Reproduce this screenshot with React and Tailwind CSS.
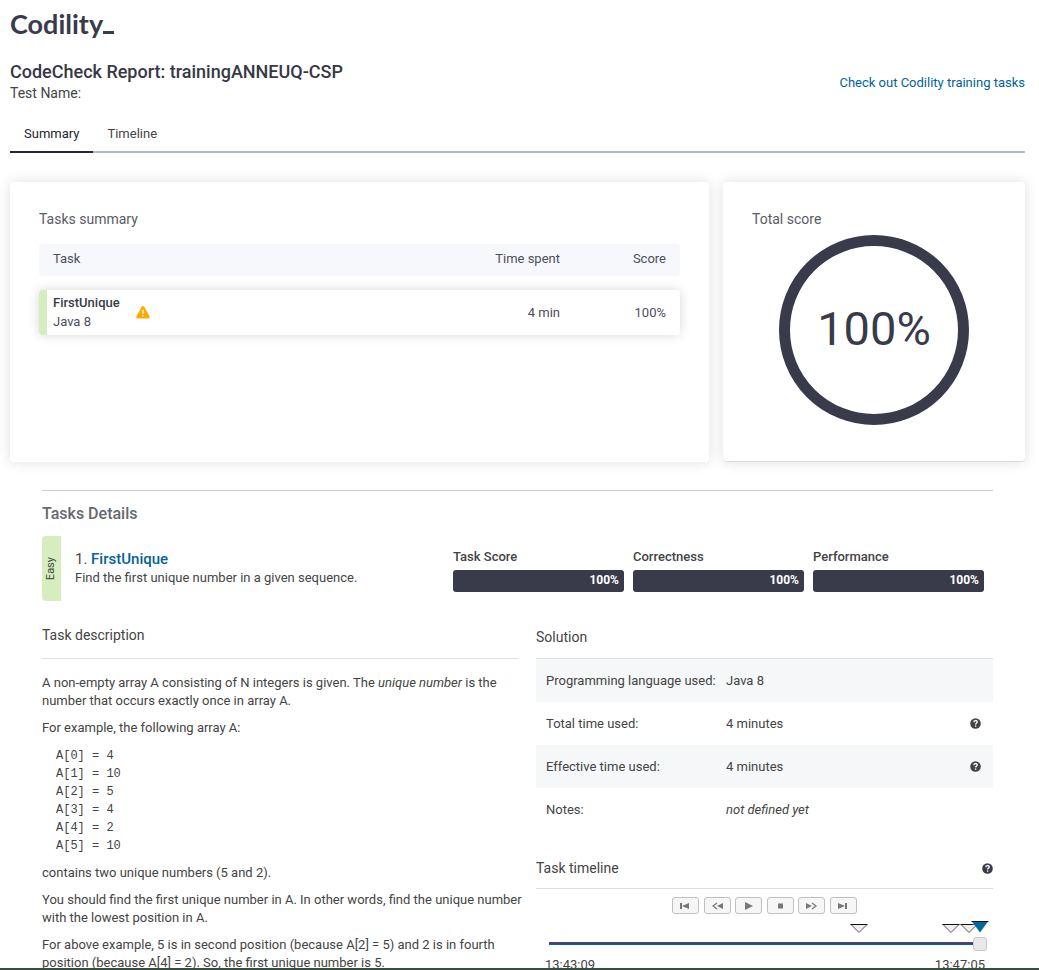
import React from "react";

const metrics = ["Task Score", "Correctness", "Performance"];

const solutionRows = [
  { label: "Programming language used:", value: "Java 8" },
  { label: "Total time used:", value: "4 minutes", help: true },
  { label: "Effective time used:", value: "4 minutes", help: true },
  { label: "Notes:", value: "not defined yet", italic: true },
];

const playerButtons = [
  { name: "Go to start", shape: <><path d="M0 1h2v6H0z" /><path d="M9 1v6L2 4z" /></> },
  { name: "Rewind", shape: <><path d="M5 1 1 4l4 3" fill="none" stroke="currentColor" strokeWidth="1.3" /><path d="M11 1v6L5 4z" /></> },
  { name: "Play", shape: <path d="M2 0v8l8-4z" /> },
  { name: "Stop", shape: <path d="M3 1.500h5v5H3z" /> },
  { name: "Fast forward", shape: <><path d="M0 1v6l6-3z" /><path d="M6 1l4 3-4 3" fill="none" stroke="currentColor" strokeWidth="1.3" /></> },
  { name: "Go to end", shape: <><path d="M0 1v6l7-3z" /><path d="M7 1h2v6H7z" /></> },
];

function HelpButton({ dark }) {
  return (
    <button type="button" aria-label="Help" className={dark ? "block text-[#393b4a]" : "block text-[#444444]"}>
      <svg width="11" height="11" viewBox="0 0 11 11" aria-hidden="true">
        <circle cx="5.5" cy="5.5" r="5.3" fill="currentColor" />
        <path d="M3.800 4.200C3.800 2 7.200 2 7.200 4 7.200 5.300 5.600 5.200 5.600 6.500" fill="none" stroke="#fff" strokeWidth="1.300" />
        <path d="M4.900 7.400h1.400v1.300H4.900z" fill="#fff" />
      </svg>
    </button>
  );
}

function Logo() {
  return (
    <a href="#home" aria-label="Codility" className="flex w-fit items-end font-['Lato',sans-serif] text-[27px] leading-[32px] font-bold text-[#393b4a]">
      Codility
      <svg width="11" height="12" viewBox="0 0 11 12" aria-hidden="true">
        <path d="M0 3h11v3H0z" fill="currentColor" />
      </svg>
    </a>
  );
}

function SummaryCard() {
  return (
    <section className="rounded-sm bg-white px-[29px] pt-[27px] pb-8 shadow-[0_0_14px_rgba(0,0,0,0.13)]">
      <h2 className="pb-px text-[14px] leading-5 text-[#5a5b66]">Tasks summary</h2>
      <table className="w-full border-separate border-spacing-x-0 border-spacing-y-[14px] text-[13px] text-[#4d4e5c]">
        <thead>
          <tr className="h-8">
            <th className="rounded-l-sm bg-[#f7f8fb] pb-[2px] pl-[14px] text-left font-normal">Task</th>
            <th className="bg-[#f7f8fb] pb-[2px] text-right font-normal">Time spent</th>
            <th className="w-[120px] rounded-r-sm bg-[#f7f8fb] pr-[14px] pb-[2px] text-right font-normal">Score</th>
          </tr>
        </thead>
        <tbody>
          <tr className="rounded-sm shadow-[0_0_12px_rgba(0,0,0,0.16)]">
            <td className="rounded-l-sm border-l-8 border-[#d5edbf] bg-white pt-[3px] pb-1 pl-[6px]">
              <div className="flex items-center gap-4">
                <div className="leading-[19px]">
                  <div className="font-medium text-[#393b4a]">FirstUnique</div>
                  <div>Java 8</div>
                </div>
                <svg width="14" height="13" viewBox="0 0 14 13" role="img" aria-label="Warning">
                  <path d="M5.700.800a1.500 1.500 0 0 1 2.600 0l5.300 9.600a1.500 1.500 0 0 1-1.300 2.200H1.700a1.500 1.500 0 0 1-1.300-2.200z" fill="#ffa800" />
                  <path d="M6.200 3.800h1.600v4H6.200zM6.200 9h1.600v1.600H6.200z" fill="#fff0cc" />
                </svg>
              </div>
            </td>
            <td className="bg-white text-right">4 min</td>
            <td className="rounded-r-sm bg-white pr-[14px] text-right">100%</td>
          </tr>
        </tbody>
      </table>
    </section>
  );
}

function ScoreCard() {
  return (
    <section className="rounded-sm border-b border-[#d9dbde] bg-white px-[29px] pt-[27px] pb-9 shadow-[0_0_14px_rgba(0,0,0,0.13)]">
      <h2 className="text-[14px] leading-5 text-[#5a5b66]">Total score</h2>
      <div className="mx-auto mt-[6px] grid size-[190px] place-items-center rounded-full border-[11px] border-[#393b4a] pb-[2px] text-[47px] text-[#393b4a]">
        <span>100%</span>
      </div>
    </section>
  );
}

function Description() {
  return (
    <div className="text-[13px] leading-[18px]">
      <h3 className="border-b border-[#dcdfe5] pt-1 pb-[13px] text-[14px] leading-5">Task description</h3>
      <div className="-mr-2 flex flex-col gap-[9px] pt-[15px]">
        <p>
          A non-empty array A consisting of N integers is given. The <i>unique number</i> is the number that occurs exactly once in array A.
        </p>
        <p>For example, the following array A:</p>
        <pre className="pt-px pl-[14px] font-['Liberation_Mono',monospace] text-[12px] leading-[18px]">
          {"A[0] = 4\nA[1] = 10\nA[2] = 5\nA[3] = 4\nA[4] = 2\nA[5] = 10"}
        </pre>
        <p>contains two unique numbers (5 and 2).</p>
        <p>You should find the first unique number in A. In other words, find the unique number with the lowest position in A.</p>
        <p>For above example, 5 is in second position (because A[2] = 5) and 2 is in fourth position (because A[4] = 2). So, the first unique number is 5.</p>
      </div>
    </div>
  );
}

function Timeline() {
  return (
    <div>
      <div className="mt-[27px] flex items-center justify-between border-b border-[#dcdddf] pb-[10px]">
        <h3 className="text-[14px] leading-5">Task timeline</h3>
        <HelpButton dark />
      </div>
      <div className="mx-auto mt-2 flex w-[185px] justify-between">
        {playerButtons.map((b) => (
          <button key={b.name} type="button" aria-label={b.name} className="grid h-[17px] w-[27px] place-items-center rounded-[3px] border border-[#c0c0c0] bg-[#f6f6f6] text-[#777777]">
            <svg width="11" height="8" viewBox="0 0 11 8" fill="currentColor" aria-hidden="true">{b.shape}</svg>
          </button>
        ))}
      </div>
      <div className="mr-[6px] ml-[13px]">
        <svg className="mt-[6px] ml-auto block" width="140" height="14" viewBox="0 0 140 14" overflow="visible" aria-hidden="true">
          <g fill="#eeeeee" stroke="#555555">
            <path d="M4 4.500h16l-8 8zM96 4.500h16l-8 8zM114 4.500h16l-8 8z" />
          </g>
          <path d="M3.500 4.500h17M95.500 4.500h17M113.500 4.500h12" stroke="#111111" />
          <path d="M125 1.500h16l-8 11z" fill="#00689b" />
          <path d="M124.500 1.500h17" stroke="#111111" />
        </svg>
        <input
          type="range"
          aria-label="Timeline position"
          defaultValue="100"
          className="mt-[2px] block h-[14px] w-full appearance-none bg-transparent [&::-webkit-slider-runnable-track]:h-[3px] [&::-webkit-slider-runnable-track]:border-y [&::-webkit-slider-runnable-track]:border-[#00689b] [&::-webkit-slider-runnable-track]:bg-[#8c2344] [&::-webkit-slider-thumb]:mt-[-6px] [&::-webkit-slider-thumb]:size-[14px] [&::-webkit-slider-thumb]:appearance-none [&::-webkit-slider-thumb]:rounded-[3px] [&::-webkit-slider-thumb]:border [&::-webkit-slider-thumb]:border-[#c8c8c8] [&::-webkit-slider-thumb]:bg-[#e9e9e9]"
        />
      </div>
      <div className="mt-[6px] flex justify-between pr-2 pl-[9px] text-[13px] leading-[18px]">
        <span>13:43:09</span>
        <span>13:47:05</span>
      </div>
    </div>
  );
}

export default function App() {
  return (
    <div className="flex h-screen flex-col overflow-hidden bg-white font-['Roboto',sans-serif] text-[#444444]">
      <main className="min-h-0 flex-1 overflow-hidden pt-2 pr-[14px] pl-[10px]">
        <Logo />
        <header className="mt-5 flex items-center justify-between">
          <div>
            <h1 className="text-[18px] leading-6 font-medium text-[#363844]">CodeCheck Report: trainingANNEUQ-CSP</h1>
            <p className="text-[14px] leading-[18px]">Test Name:</p>
          </div>
          <a href="#training" className="pt-1 text-[13px] leading-[18px] text-[#00639a]">Check out Codility training tasks</a>
        </header>
        <nav className="mt-[18px] flex border-b-2 border-[#b2bbc7] text-[13px] leading-[18px]">
          <a href="#summary" className="-mb-[2px] border-b-2 border-[#22262e] px-[14px] pt-[5px] pb-2 text-[#22262e]">Summary</a>
          <a href="#timeline" className="px-[14px] pt-[5px] pb-2">Timeline</a>
        </nav>
        <div className="mt-[29px] grid grid-cols-[1fr_302px] gap-[14px]">
          <SummaryCard />
          <ScoreCard />
        </div>

        <section className="mt-7 mr-8 ml-8 border-t border-[#cccccc]">
          <h2 className="pt-[11px] text-[16px] leading-6 font-medium text-[#666870]">Tasks Details</h2>
          <div className="mt-[10px] flex">
            <div className="grid h-[65px] w-[19px] place-items-center rounded-l-sm bg-[#d5edbf] text-[11px]">
              <span className="rotate-180 [writing-mode:vertical-rl]">Easy</span>
            </div>
            <div className="flex-1 pt-[14px] pl-[14px]">
              <h3 className="text-[15px] leading-[19px]">
                1. <a href="#task" className="font-medium text-[#00639a]">FirstUnique</a>
              </h3>
              <p className="text-[13px] leading-[18px]">Find the first unique number in a given sequence.</p>
            </div>
            <div className="mr-[9px] grid w-[531px] grid-cols-3 gap-[9px] pt-3 text-[13px] leading-[18px] font-medium">
              {metrics.map((m) => (
                <div key={m}>
                  <div>{m}</div>
                  <div className="mt-1 h-[22px] rounded-[3px] bg-[#393b4a] pt-[1px] pr-[5px] text-right text-[12px] font-bold text-white">100%</div>
                </div>
              ))}
            </div>
          </div>

          <div className="mt-5 grid grid-cols-[1fr_457px] gap-[18px]">
            <Description />
            <div>
              <h3 className="border-b border-[#dcdfe5] pt-[6px] pb-[11px] text-[14px] leading-5">Solution</h3>
              <table className="w-full text-[13px] leading-[18px]">
                <tbody>
                  {solutionRows.map((r) => (
                    <tr key={r.label} className="h-[43px] odd:bg-[#f6f7f9]">
                      <th scope="row" className="w-[190px] pl-[10px] text-left font-normal">{r.label}</th>
                      <td className={r.italic ? "italic" : ""}>{r.value}</td>
                      <td className="w-[23px]">{r.help && <HelpButton />}</td>
                    </tr>
                  ))}
                </tbody>
              </table>
              <Timeline />
            </div>
          </div>
        </section>
      </main>
      <div className="h-[2px] shrink-0 bg-[#33503f]" />
    </div>
  );
}
